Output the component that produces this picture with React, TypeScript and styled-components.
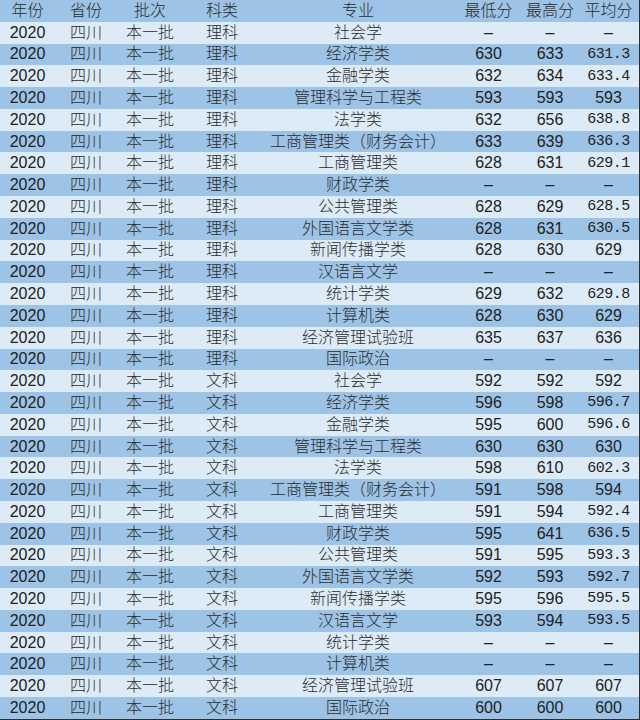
import styled, { createGlobalStyle } from "styled-components";

const GlobalStyle = createGlobalStyle`
  html, body {
    margin: 0;
    padding: 0;
    background: #ffffff;
  }
`;

const COLUMNS = "55px 62px 66px 78px 194px 67px 56px 61px";

const Sheet = styled.div`
  width: 639px;
  height: 719px;
  display: flex;
  flex-direction: column;
  border-right: 1px solid #2e2e2e;
  border-bottom: 1px solid #2e2e2e;
  font-family: "Liberation Sans", "Noto Sans CJK SC", sans-serif;
  font-size: 16px;
  color: #222222;
`;

const Row = styled.div<{ $dark: boolean }>`
  flex: 1;
  display: grid;
  grid-template-columns: ${COLUMNS};
  align-items: center;
  background-color: ${(p) => (p.$dark ? "#9dc3e6" : "#ddebf7")};
`;

const Cell = styled.div<{ $mono?: boolean; $cjk?: boolean }>`
  text-align: center;
  white-space: nowrap;
  line-height: 1;
  font-family: ${(p) =>
    p.$mono
      ? `"Liberation Mono", "Noto Sans CJK SC", monospace`
      : `"Liberation Sans", "Noto Sans CJK SC", sans-serif`};
  font-size: ${(p) => (p.$mono ? "15px" : "16px")};
  letter-spacing: ${(p) => (p.$mono ? "-0.5px" : "0")};
  font-weight: ${(p) => (p.$cjk ? 300 : 400)};
  color: ${(p) => (p.$cjk ? "#2c2c2c" : "#222222")};
`;

const HeadCell = styled(Cell)`
  color: #2a2a2a;
`;

const majors = [
  "社会学",
  "经济学类",
  "金融学类",
  "管理科学与工程类",
  "法学类",
  "工商管理类（财务会计）",
  "工商管理类",
  "财政学类",
  "公共管理类",
  "外国语言文学类",
  "新闻传播学类",
  "汉语言文学",
  "统计学类",
  "计算机类",
  "经济管理试验班",
  "国际政治",
];

const scienceScores: [string, string, string][] = [
  ["–", "–", "–"],
  ["630", "633", "631.3"],
  ["632", "634", "633.4"],
  ["593", "593", "593"],
  ["632", "656", "638.8"],
  ["633", "639", "636.3"],
  ["628", "631", "629.1"],
  ["–", "–", "–"],
  ["628", "629", "628.5"],
  ["628", "631", "630.5"],
  ["628", "630", "629"],
  ["–", "–", "–"],
  ["629", "632", "629.8"],
  ["628", "630", "629"],
  ["635", "637", "636"],
  ["–", "–", "–"],
];

const artsScores: [string, string, string][] = [
  ["592", "592", "592"],
  ["596", "598", "596.7"],
  ["595", "600", "596.6"],
  ["630", "630", "630"],
  ["598", "610", "602.3"],
  ["591", "598", "594"],
  ["591", "594", "592.4"],
  ["595", "641", "636.5"],
  ["591", "595", "593.3"],
  ["592", "593", "592.7"],
  ["595", "596", "595.5"],
  ["593", "594", "593.5"],
  ["–", "–", "–"],
  ["–", "–", "–"],
  ["607", "607", "607"],
  ["600", "600", "600"],
];

type Record = {
  track: string;
  major: string;
  scores: [string, string, string];
};

const records: Record[] = [
  ...majors.map((major, i) => ({ track: "理科", major, scores: scienceScores[i] })),
  ...majors.map((major, i) => ({ track: "文科", major, scores: artsScores[i] })),
];

const headers = ["年份", "省份", "批次", "科类", "专业", "最低分", "最高分", "平均分"];

export default function App() {
  return (
    <>
      <GlobalStyle />
      <Sheet>
        <Row $dark>
          {headers.map((h) => (
            <HeadCell key={h} $cjk>
              {h}
            </HeadCell>
          ))}
        </Row>
        {records.map((r, i) => (
          <Row key={i} $dark={i % 2 === 1}>
            <Cell>2020</Cell>
            <Cell $cjk>四川</Cell>
            <Cell $cjk>本一批</Cell>
            <Cell $cjk>{r.track}</Cell>
            <Cell $cjk>{r.major}</Cell>
            <Cell>{r.scores[0]}</Cell>
            <Cell>{r.scores[1]}</Cell>
            <Cell $mono={r.scores[2].includes(".")}>{r.scores[2]}</Cell>
          </Row>
        ))}
      </Sheet>
    </>
  );
}
